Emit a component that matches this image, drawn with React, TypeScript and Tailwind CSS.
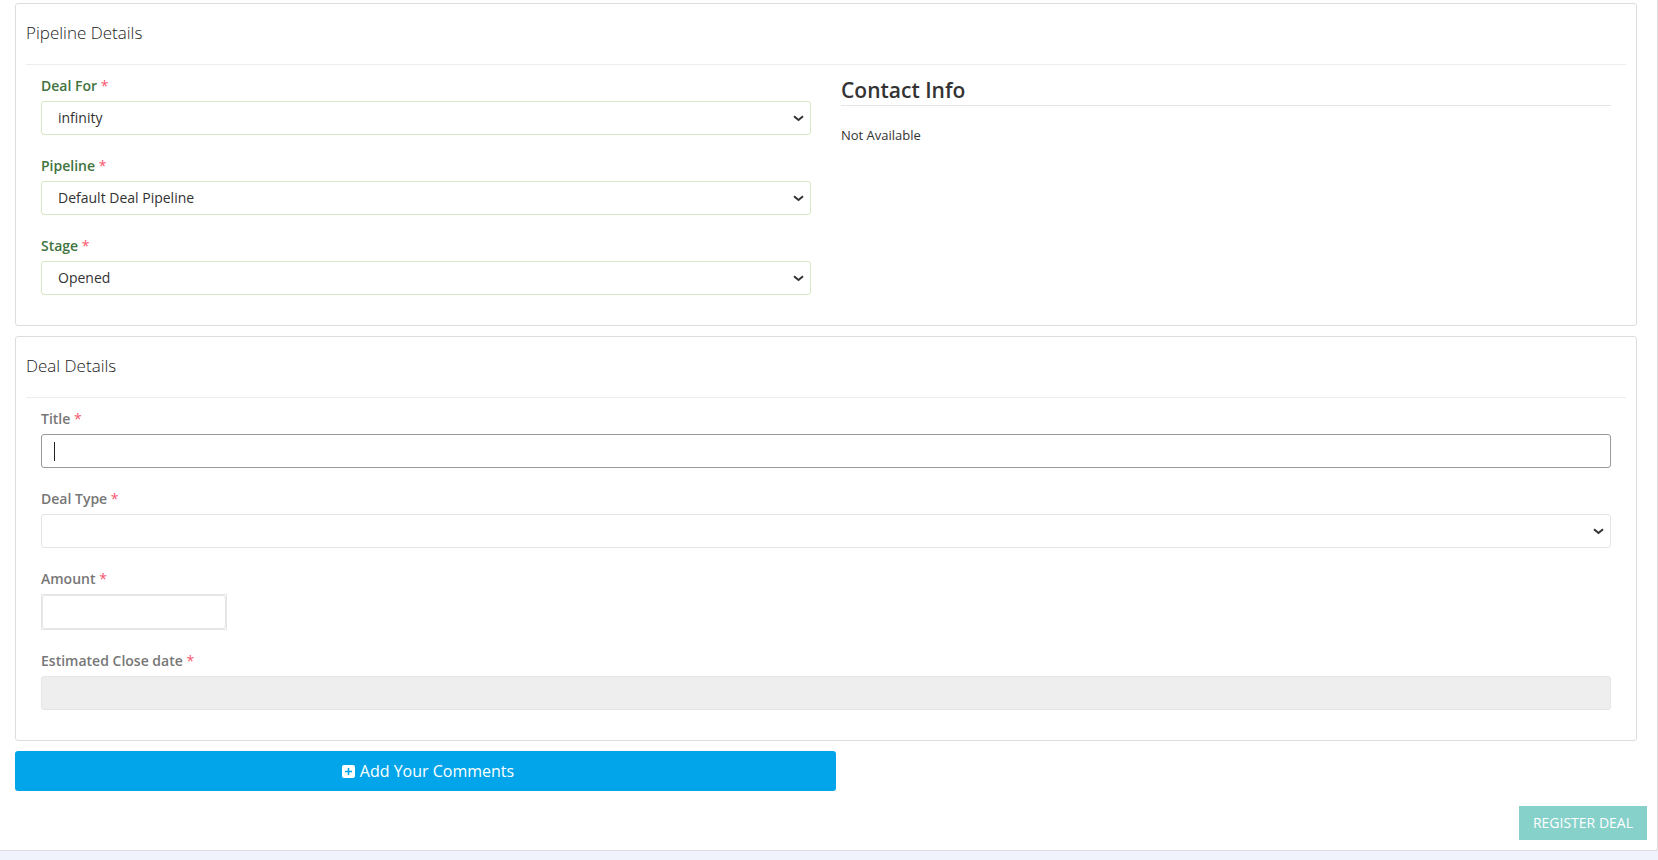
import React, { useState } from 'react';

const fieldClass = 'block w-full h-[34px] rounded-[3px] border bg-white text-sm text-[#333] outline-none';

const Label = ({ id, text, valid }: { id: string; text: string; valid?: boolean }) => (
  <label
    htmlFor={id}
    className={`block mb-[5px] text-sm font-semibold ${valid ? 'text-[#3f7340]' : 'text-[#777]'}`}
  >
    {text} <span className="font-normal text-[#f9556f]">*</span>
  </label>
);

const Select = ({ id, options, valid }: { id: string; options: string[]; valid?: boolean }) => (
  <div className="relative">
    <select
      id={id}
      className={`${fieldClass} appearance-none pl-4 pr-8 ${valid ? 'border-[#d6e9c6]' : 'border-[#e5e5e5]'}`}
    >
      {options.map((option) => (
        <option key={option}>{option}</option>
      ))}
    </select>
    <svg
      className="pointer-events-none absolute top-[14px] right-[7px] h-[7px] w-[11px]"
      viewBox="0 0 11 7"
      fill="none"
      aria-hidden="true"
    >
      <path d="M1 1.2l4.5 3.7L10 1.2" stroke="#333" strokeWidth="2" />
    </svg>
  </div>
);

const Card = ({ title, children }: { title: string; children: React.ReactNode }) => (
  <section className="mr-5 mb-[10px] rounded-[3px] border border-[#ddd] px-[10px] pb-[30px]">
    <h2 className="border-b border-[#eee] pt-[17px] pb-[19px] text-[17px] leading-6 font-light text-[#222]">
      {title}
    </h2>
    <div className="px-[15px] pt-[11px]">{children}</div>
  </section>
);

const App = () => {
  const [title, setTitle] = useState('');
  const [amount, setAmount] = useState('');

  return (
    <div className="min-h-screen bg-[#f0f3fb] font-['Open_Sans','Noto_Sans',sans-serif] text-[#333]">
      <form
        className="rounded-br-[3px] border-r border-b border-[#ddd] bg-white pl-[15px] pt-[3px] pb-[10px]"
        onSubmit={(e) => e.preventDefault()}
      >
        <Card title="Pipeline Details">
          <div className="grid grid-cols-2 gap-[30px]">
            <div className="flex flex-col gap-[21px]">
              <div>
                <Label id="dealFor" text="Deal For" valid />
                <Select id="dealFor" options={['infinity']} valid />
              </div>
              <div>
                <Label id="pipeline" text="Pipeline" valid />
                <Select id="pipeline" options={['Default Deal Pipeline']} valid />
              </div>
              <div>
                <Label id="stage" text="Stage" valid />
                <Select id="stage" options={['Opened']} valid />
              </div>
            </div>
            <div>
              <h3 className="border-b border-[#e5e5e5] pb-px text-[21px] leading-7 font-semibold">Contact Info</h3>
              <p className="mt-5 text-[13px] leading-[18px]">Not Available</p>
            </div>
          </div>
        </Card>

        <Card title="Deal Details">
          <div className="flex flex-col gap-[21px]">
            <div>
              <Label id="title" text="Title" />
              <div className="relative">
                <input
                  id="title"
                  type="text"
                  autoFocus
                  className={`${fieldClass} border-[#999] px-3 ${title === '' ? 'caret-transparent' : ''}`}
                  value={title}
                  onChange={(e) => setTitle(e.target.value)}
                />
                {title === '' && (
                  <span className="pointer-events-none absolute top-2 left-[13px] h-[19px] w-px bg-[#222]" />
                )}
              </div>
            </div>
            <div>
              <Label id="dealType" text="Deal Type" />
              <Select id="dealType" options={['']} />
            </div>
            <div>
              <Label id="amount" text="Amount" />
              <div className="w-[186px] border border-[#e5e5e5]">
                <input
                  id="amount"
                  type="text"
                  className={`${fieldClass} border-[#e5e5e5] px-3`}
                  value={amount}
                  onChange={(e) => setAmount(e.target.value)}
                />
              </div>
            </div>
            <div>
              <Label id="closeDate" text="Estimated Close date" />
              <input
                id="closeDate"
                type="text"
                readOnly
                className="block w-full h-[34px] rounded-[3px] border border-[#e5e5e5] bg-[#eee] px-3 text-sm outline-none"
              />
            </div>
          </div>
        </Card>

        <button
          type="button"
          className="flex h-10 w-1/2 items-center justify-center gap-[5px] rounded-[3px] bg-[#02a5e9] pl-[5px] text-base text-white"
        >
          <svg className="size-[13px]" viewBox="0 0 13 13" aria-hidden="true">
            <rect width="13" height="13" rx="2" fill="#fff" />
            <path d="M6.5 3v7M3 6.5h7" stroke="#02a5e9" strokeWidth="1.6" />
          </svg>
          Add Your Comments
        </button>

        <div className="mt-[15px] mr-[10px] flex justify-end">
          <button type="submit" className="h-[34px] bg-[#87d1cb] px-[14px] text-sm text-white">
            REGISTER DEAL
          </button>
        </div>
      </form>
    </div>
  );
};

export default App;
